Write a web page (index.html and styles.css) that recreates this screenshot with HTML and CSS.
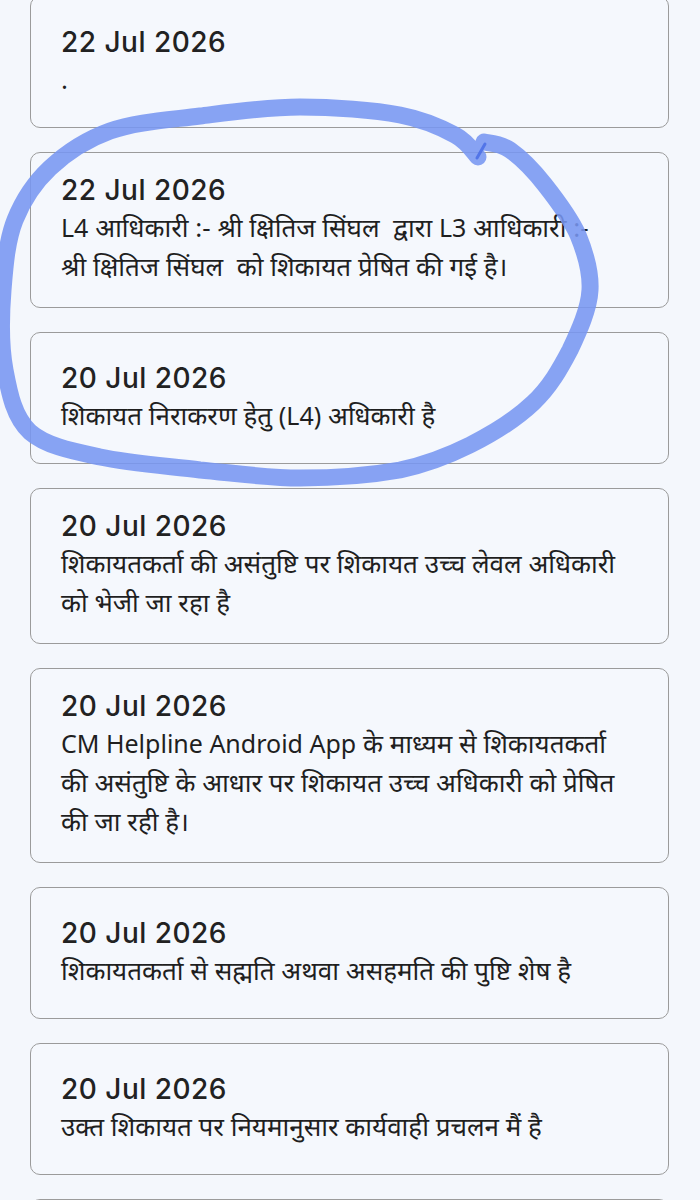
FILE: index.html
```html
<!DOCTYPE html>
<html lang="hi">
<head>
    <meta charset="UTF-8">
    <meta name="viewport" content="width=device-width, initial-scale=1.0">
    <title>शिकायत की स्थिति</title>
    <link rel="stylesheet" href="styles.css">
</head>
<body>
    <div class="timeline">
        <div class="entry">
            <div class="entry-date">22 Jul 2026</div>
            <div class="entry-text">.</div>
        </div>
        <div class="entry">
            <div class="entry-date">22 Jul 2026</div>
            <div class="entry-text"><span class="latin">L4</span> आधिकारी :- श्री क्षितिज सिंघल &nbsp;द्वारा <span class="latin">L3</span> आधिकारी :- श्री क्षितिज सिंघल &nbsp;को शिकायत प्रेषित की गई है।</div>
        </div>
        <div class="entry">
            <div class="entry-date">20 Jul 2026</div>
            <div class="entry-text">शिकायत निराकरण हेतु <span class="latin">(L4)</span> अधिकारी है</div>
        </div>
        <div class="entry">
            <div class="entry-date">20 Jul 2026</div>
            <div class="entry-text">शिकायतकर्ता की असंतुष्टि पर शिकायत उच्च लेवल अधिकारी को भेजी जा रहा है</div>
        </div>
        <div class="entry">
            <div class="entry-date">20 Jul 2026</div>
            <div class="entry-text"><span class="latin">CM Helpline Android App</span> के माध्यम से शिकायतकर्ता की असंतुष्टि के आधार पर शिकायत उच्च अधिकारी को प्रेषित की जा रही है।</div>
        </div>
        <div class="entry">
            <div class="entry-date">20 Jul 2026</div>
            <div class="entry-text">शिकायतकर्ता से सह्मति अथवा असहमति की पुष्टि शेष है</div>
        </div>
        <div class="entry">
            <div class="entry-date">20 Jul 2026</div>
            <div class="entry-text">उक्त शिकायत पर नियमानुसार कार्यवाही प्रचलन मैं है</div>
        </div>
        <div class="entry">
            <div class="entry-date">19 Jul 2026</div>
            <div class="entry-text">शिकायत दर्ज की गई है</div>
        </div>

        <!-- hand-drawn marker circle over the 2nd and 3rd entries -->
        <svg class="scribble" width="700" height="520" viewBox="0 0 700 520">
            <path d="M478 157 C474 153 468 142 455 135 C442 128 426 120 400 115 C374 110 333 107 300 107 C267 107 232 112 200 116 C168 120 135 122 110 131 C85 140 66 153 50 168 C34 183 23 200 15 220 C7 240 5 265 3 290 C1 315 0.5 346 5 370 C9.5 394 14 417 30 432 C46 446 72 451 100 457 C128 463 167 466 200 470 C233 473 267 478 300 478 C333 478 372 475 400 470 C428 464 448 456 470 445 C492 434 516 419 533 403 C550 387 560 369 570 350 C579 331 589 309 590 290 C591 271 585 252 578 235 C570 217 556 199 545 185 C534 171 520 157 510 150 C500 143 488 143 484 142" />
            <path class="overlap" d="M485 144 L477 158" />
        </svg>
    </div>
</body>
</html>
```

FILE: styles.css
```css
body {
    margin: 0;
    background-color: #f4f7fc;
    font-family: "Noto Sans", "Noto Sans Devanagari", "Liberation Sans", sans-serif;
    color: #202124;
}
.timeline {
    position: relative;
    display: flex;
    flex-direction: column;
    gap: 24px;
    padding: 0 31px 0 30px;
    margin-top: -4px;
}
.entry {
    box-sizing: border-box;
    min-height: 132px;
    display: flex;
    flex-direction: column;
    justify-content: center;
    padding: 19px 50px 21px 30px;
    border: 1.5px solid #9b9b9b;
    border-radius: 10px;
    background-color: #f5f8fd;
}
.entry-date {
    font-family: Inter, "Noto Sans", sans-serif;
    font-size: 28px;
    font-weight: 500;
    letter-spacing: 0.5px;
    line-height: 36px;
    color: #222;
}
.entry-text {
    font-size: 26px;
    line-height: 39px;
    color: #1f1f1f;
}
.latin {
    font-size: 25px;
}
.scribble {
    position: absolute;
    left: 0;
    top: 4px;
    pointer-events: none;
    overflow: visible;
}
.scribble path {
    fill: none;
    stroke: #7896f1;
    stroke-opacity: 0.88;
    stroke-width: 17;
    stroke-linecap: round;
    stroke-linejoin: round;
}
.scribble .overlap {
    stroke: #4b6ee6;
    stroke-width: 3;
}
```
